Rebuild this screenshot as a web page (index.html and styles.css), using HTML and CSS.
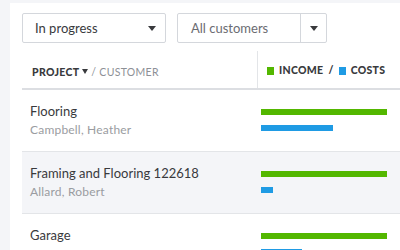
FILE: index.html
```html
<!DOCTYPE html>
<html lang="en">
<head>
    <meta charset="UTF-8">
    <title>Projects</title>
    <link rel="stylesheet" href="styles.css">
</head>
<body>

<div class="panel">
    <div class="filters">
        <div class="select status">
            <span>In progress</span>
            <span class="caret"></span>
        </div>
        <div class="select customers">
            <span class="value">All customers</span>
            <span class="toggle"><span class="caret"></span></span>
        </div>
    </div>

    <div class="table">
        <div class="row head">
            <div class="cell name">
                <b>PROJECT</b> <span class="caret small"></span> <span class="sub">/ CUSTOMER</span>
            </div>
            <div class="cell bars">
                <span class="key income"></span><b>INCOME</b> <b class="slash">/</b> <span class="key costs"></span><b>COSTS</b>
            </div>
        </div>

        <div class="row">
            <div class="cell name">
                <div class="title">Flooring</div>
                <div class="sub">Campbell, Heather</div>
            </div>
            <div class="cell bars">
                <div class="bar income" style="width: 126px;"></div>
                <div class="bar costs" style="width: 72px;"></div>
            </div>
        </div>

        <div class="row alt">
            <div class="cell name">
                <div class="title">Framing and Flooring 122618</div>
                <div class="sub">Allard, Robert</div>
            </div>
            <div class="cell bars">
                <div class="bar income" style="width: 126px;"></div>
                <div class="bar costs" style="width: 12px;"></div>
            </div>
        </div>

        <div class="row">
            <div class="cell name">
                <div class="title">Garage</div>
                <div class="sub">Nguyen, Tran</div>
            </div>
            <div class="cell bars">
                <div class="bar income" style="width: 126px;"></div>
                <div class="bar costs" style="width: 41px;"></div>
            </div>
        </div>
    </div>
</div>

</body>
</html>
```

FILE: styles.css
```css
body {
    margin: 0;
    height: 250px;
    overflow: hidden;
    background-color: #f4f5f8;
    font-family: Lato, "Open Sans", sans-serif;
    color: #393a3d;
}
.panel {
    margin: 3px 0 0 10px;
    padding: 10px 0 0 12px;
    background-color: #fff;
    height: 247px;
    box-sizing: border-box;
    overflow: hidden;
}
.filters {
    display: flex;
    gap: 11px;
}
.select {
    display: flex;
    align-items: center;
    height: 28px;
    border: 1px solid #d4d7dc;
    border-radius: 2px;
    font-size: 13px;
}
.select.status {
    width: 121px;
    justify-content: space-between;
    padding: 0 9px 0 12px;
}
.select.customers {
    width: 148px;
}
.select .value {
    flex: 1;
    padding-left: 13px;
    color: #6b6c72;
}
.select .toggle {
    width: 25px;
    height: 100%;
    border-left: 1px solid #d4d7dc;
    display: flex;
    align-items: center;
    justify-content: center;
}
.caret {
    display: inline-block;
    width: 0;
    height: 0;
    border-left: 4px solid transparent;
    border-right: 4px solid transparent;
    border-top: 5px solid #393a3d;
}
.caret.small {
    border-left-width: 3.5px;
    border-right-width: 3.5px;
    vertical-align: 2px;
}
.table {
    margin-top: 8px;
}
.row {
    display: grid;
    grid-template-columns: 235px 1fr;
    height: 61px;
    border-bottom: 1px solid #e3e5e8;
}
.row.alt {
    background-color: #f4f5f8;
}
.row.head {
    height: 37px;
    border-bottom: 2px solid #dcdee2;
    font-size: 10.5px;
    letter-spacing: 0.3px;
}
.head .cell {
    padding-top: 13px;
}
.head .name {
    padding-left: 10px;
}
.head b {
    font-weight: 900;
}
.head .sub {
    font-size: 10.5px;
    letter-spacing: 0.3px;
    color: #8d9096;
}
.head .bars {
    border-left: 1px solid #e3e5e8;
    padding-left: 9px;
}
.head .slash {
    margin: 0 2px;
}
.key {
    display: inline-block;
    width: 7px;
    height: 8px;
    margin-right: 5px;
    vertical-align: -1px;
}
.key.income, .bar.income {
    background-color: #53b700;
}
.key.costs, .bar.costs {
    background-color: #1f9be4;
}
.name {
    padding: 12px 0 0 8px;
}
.title {
    font-size: 13px;
    line-height: 18px;
}
.sub {
    font-size: 12px;
    letter-spacing: 0.2px;
    line-height: 16px;
    color: #9a9ca1;
    margin-top: 2px;
}
.bars {
    padding: 19px 0 0 4px;
}
.bar {
    height: 6px;
    margin-bottom: 10px;
}
```
